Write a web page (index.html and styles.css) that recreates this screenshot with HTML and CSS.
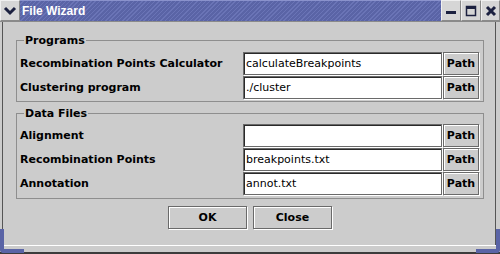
FILE: index.html
```html
<!DOCTYPE html>
<html lang="en">
<head>
    <meta charset="UTF-8">
    <title>File Wizard</title>
    <link rel="stylesheet" href="styles.css">
</head>
<body>
    <div class="window">
        <div class="titlebar">
            <div class="menu-btn">
                <svg width="14" height="10" viewBox="0 0 14 10"><path d="M2 2 L7 7 L12 2" fill="none" stroke="#1c2140" stroke-width="3"/></svg>
            </div>
            <div class="title">File Wizard</div>
            <div class="ctrl">
                <svg width="12" height="12" viewBox="0 0 12 12"><rect x="1" y="6" width="10" height="3" fill="#1c2140"/></svg>
            </div>
            <div class="ctrl">
                <svg width="12" height="12" viewBox="0 0 12 12"><rect x="1.5" y="1.5" width="9" height="9" fill="none" stroke="#1c2140" stroke-width="1.5"/><rect x="1" y="1" width="10" height="3" fill="#1c2140"/></svg>
            </div>
            <div class="ctrl">
                <svg width="12" height="12" viewBox="0 0 12 12"><path d="M2 2 L10 10 M10 2 L2 10" stroke="#1c2140" stroke-width="3"/></svg>
            </div>
        </div>

        <div class="content">
            <fieldset class="group">
                <legend>Programs</legend>
                <div class="row">
                    <label>Recombination Points Calculator</label>
                    <input type="text" value="calculateBreakpoints">
                    <button class="path-btn">Path</button>
                </div>
                <div class="row">
                    <label>Clustering program</label>
                    <input type="text" value="./cluster">
                    <button class="path-btn">Path</button>
                </div>
            </fieldset>

            <fieldset class="group">
                <legend>Data Files</legend>
                <div class="row">
                    <label>Alignment</label>
                    <input type="text" value="">
                    <button class="path-btn">Path</button>
                </div>
                <div class="row">
                    <label>Recombination Points</label>
                    <input type="text" value="breakpoints.txt">
                    <button class="path-btn">Path</button>
                </div>
                <div class="row">
                    <label>Annotation</label>
                    <input type="text" value="annot.txt">
                    <button class="path-btn">Path</button>
                </div>
            </fieldset>

            <div class="actions">
                <button class="dlg-btn">OK</button>
                <button class="dlg-btn">Close</button>
            </div>
        </div>
        <div class="frame-bottom"></div>
        <div class="corner left"></div>
        <div class="corner right"></div>
    </div>
</body>
</html>
```

FILE: styles.css
```css
body {
    margin: 0;
    font-family: "DejaVu Sans", sans-serif;
    background-color: #cccccc;
}
.window {
    position: relative;
    width: 500px;
    height: 254px;
    display: flex;
    flex-direction: column;
    background-color: #cccccc;
    overflow: hidden;
}
.titlebar {
    height: 22px;
    display: flex;
    border-bottom: 1px solid #8a8a8a;
    box-sizing: border-box;
}
.menu-btn {
    width: 20px;
    display: flex;
    align-items: center;
    justify-content: center;
    border: 1px solid #8a8a8a;
    border-top-color: #f0f0f0;
    border-left-color: #f0f0f0;
    background-color: #d6d6d6;
    box-sizing: border-box;
}
.title {
    flex: 1;
    color: #ffffff;
    font-family: "Liberation Sans", sans-serif;
    font-weight: bold;
    font-size: 12px;
    line-height: 20px;
    padding-left: 2px;
    background-color: #5a64a6;
    background-image: repeating-linear-gradient(135deg, #5a64a6 0px, #5a64a6 2px, #6a74b6 2px, #6a74b6 3px);
    border-top: 1px solid #8a92cc;
}
.ctrl {
    width: 20px;
    display: flex;
    align-items: center;
    justify-content: center;
    background-color: #d6d6d6;
    border: 1px solid #8a8a8a;
    border-top-color: #f0f0f0;
    border-left-color: #f0f0f0;
    box-sizing: border-box;
}
.ctrl:last-child {
    width: 19px;
}
.content {
    height: 223px;
    box-sizing: border-box;
    margin: 0 4px 0 2px;
    border-left: 1px solid #555555;
    border-right: 1px solid #555555;
    padding: 12px 11px 0 13px;
    display: flex;
    flex-direction: column;
}
.group {
    margin: 0 0 5px 0;
    padding: 5px 4px 2px 3px;
    border: 1px solid #8e8e8e;
    display: flex;
    flex-direction: column;
    gap: 1px;
}
.group + .group {
    padding-top: 4px;
    padding-bottom: 3px;
}
.group legend {
    font-weight: bold;
    font-size: 11px;
    line-height: 13px;
    padding: 0 1px;
    margin-left: 4px;
    color: #000000;
}
.row {
    display: grid;
    grid-template-columns: 1fr 199px 36px;
    column-gap: 1px;
    height: 23px;
    align-items: stretch;
}
.row label {
    font-weight: bold;
    font-size: 11px;
    white-space: nowrap;
    align-self: center;
}
.row input {
    margin: 0;
    padding: 0 2px;
    border: 1px solid #6a6a6a;
    box-shadow: inset 1px 1px 0 #2a2a2a, 1px 1px 0 #ffffff;
    font-family: "DejaVu Sans", sans-serif;
    font-size: 11px;
    background-color: #ffffff;
    outline: none;
}
.path-btn {
    margin: 0;
    padding: 0;
    border: 1px solid #6a6a6a;
    box-shadow: inset 1px 1px 0 #ffffff, 1px 1px 0 #ffffff;
    background-color: #cccccc;
    font-family: "DejaVu Sans", sans-serif;
    font-weight: bold;
    font-size: 11px;
    color: #000000;
}
.actions {
    display: flex;
    justify-content: center;
    gap: 6px;
    margin-top: 2px;
}
.dlg-btn {
    width: 79px;
    height: 23px;
    padding: 0;
    border: 1px solid #6a6a6a;
    box-shadow: inset 1px 1px 0 #ffffff, 1px 1px 0 #ffffff;
    background-color: #cccccc;
    font-family: "DejaVu Sans", sans-serif;
    font-weight: bold;
    font-size: 11px;
    color: #000000;
}
.frame-bottom {
    flex: 1;
    border-top: 1px solid #ffffff;
    border-bottom: 2px solid #3c3c3c;
}
.corner {
    position: absolute;
    bottom: 1px;
    width: 20px;
    height: 20px;
    border-bottom: 4px solid #5a64a6;
}
.corner.left {
    left: 0;
    border-left: 4px solid #5a64a6;
    border-bottom-left-radius: 4px;
}
.corner.right {
    right: 0;
    border-right: 4px solid #5a64a6;
    border-bottom-right-radius: 4px;
}
```
